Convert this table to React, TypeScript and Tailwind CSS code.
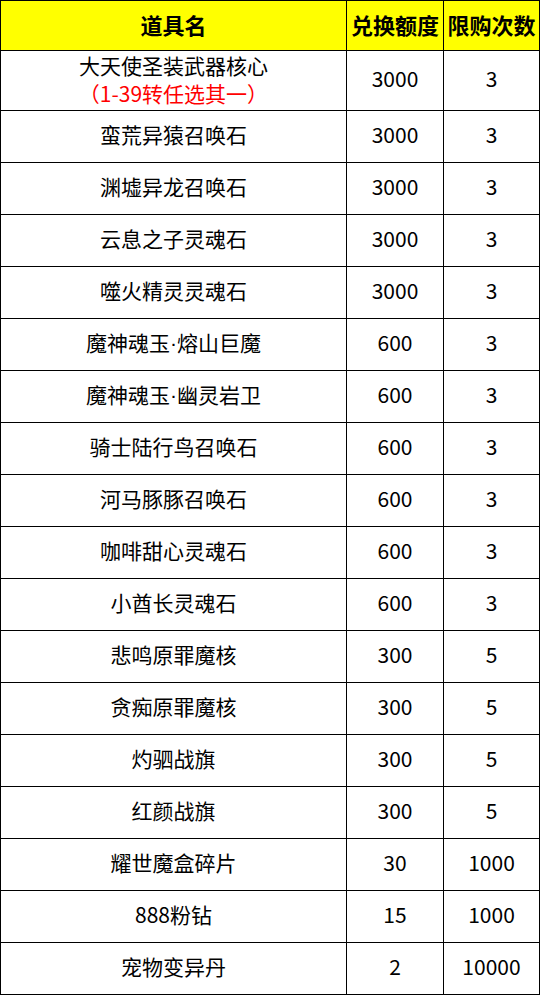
import React from "react";

const rows: [string, string, string][] = [
  ["蛮荒异猿召唤石", "3000", "3"],
  ["渊墟异龙召唤石", "3000", "3"],
  ["云息之子灵魂石", "3000", "3"],
  ["噬火精灵灵魂石", "3000", "3"],
  ["魔神魂玉·熔山巨魔", "600", "3"],
  ["魔神魂玉·幽灵岩卫", "600", "3"],
  ["骑士陆行鸟召唤石", "600", "3"],
  ["河马豚豚召唤石", "600", "3"],
  ["咖啡甜心灵魂石", "600", "3"],
  ["小酋长灵魂石", "600", "3"],
  ["悲鸣原罪魔核", "300", "5"],
  ["贪痴原罪魔核", "300", "5"],
  ["灼驷战旗", "300", "5"],
  ["红颜战旗", "300", "5"],
  ["耀世魔盒碎片", "30", "1000"],
  ["888粉钻", "15", "1000"],
  ["宠物变异丹", "2", "10000"],
];

const font = { fontFamily: '"Noto Sans CJK SC", "Noto Sans", sans-serif' };

function Name({ text }: { text: string }) {
  const parts = text.split("·");
  if (parts.length === 1) return <>{text}</>;
  return (
    <>
      {parts[0]}
      <span className="font-['Liberation_Sans',sans-serif]">·</span>
      {parts[1]}
    </>
  );
}

export default function App() {
  return (
    <div className="w-[540px] bg-white text-black" style={font}>
      <div className="w-[540px] border-l border-t border-black">
        <div className="flex h-[50px] bg-[#ffff00] border-b border-black text-[22px] font-bold">
          <div className="w-[346px] border-r border-black flex items-center justify-center pb-[2px]">道具名</div>
          <div className="w-[97px] border-r border-black flex items-center justify-center pb-[2px]">兑换额度</div>
          <div className="w-[96px] border-r border-black flex items-center justify-center pb-[2px]">限购次数</div>
        </div>
        <div className="flex h-[60px] border-b border-black text-[21px]">
          <div className="w-[346px] border-r border-black flex flex-col items-center justify-center leading-[28px] pb-[3px]">
            <div>大天使圣装武器核心</div>
            <div className="text-[#ff0000]">（1-39转任选其一）</div>
          </div>
          <div className="w-[97px] border-r border-black flex items-center justify-center pb-[3px]">3000</div>
          <div className="w-[96px] border-r border-black flex items-center justify-center pb-[3px]">3</div>
        </div>
        {rows.map(([name, price, limit]) => (
          <div key={name} className="flex h-[52px] border-b border-black text-[21px]">
            <div className="w-[346px] border-r border-black flex items-center justify-center pb-[3px]">
              <Name text={name} />
            </div>
            <div className="w-[97px] border-r border-black flex items-center justify-center pb-[3px]">{price}</div>
            <div className="w-[96px] border-r border-black flex items-center justify-center pb-[3px]">{limit}</div>
          </div>
        ))}
      </div>
    </div>
  );
}
